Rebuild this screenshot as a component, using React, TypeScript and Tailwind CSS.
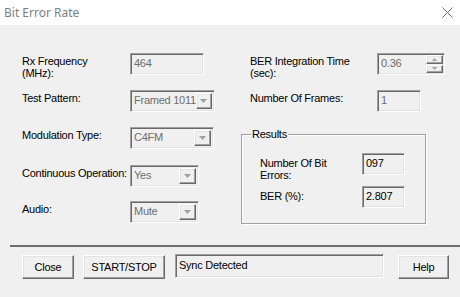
import React from "react";

const sunken =
  "border border-t-[#a0a0a0] border-l-[#a0a0a0] border-r-white border-b-white shadow-[inset_1px_1px_0_#696969,inset_-1px_-1px_0_#e3e3e3]";
const raised =
  "border border-t-white border-l-white border-r-[#696969] border-b-[#696969] shadow-[inset_-1px_-1px_0_#a0a0a0,inset_1px_1px_0_#e3e3e3]";

function Arrow() {
  return (
    <svg width="7" height="4" viewBox="0 0 7 4">
      <polygon points="0,0 7,0 3.5,4" fill="#a0a0a0" />
    </svg>
  );
}

function Edit({ value, w, dark = false }: { value: string; w: string; dark?: boolean }) {
  return (
    <div
      className={`${sunken} ${w} h-[22px] bg-[#f0f0f0] pl-[3px] pt-[3px] whitespace-nowrap ${
        dark ? "text-black" : "text-[#6d6d6d]"
      }`}
    >
      {value}
    </div>
  );
}

function Combo({ value, w }: { value: string; w: string }) {
  return (
    <div className={`${sunken} ${w} h-[22px] flex items-end pb-[2px] pr-[2px]`}>
      <div className="flex-1 self-start pl-[3px] pt-[3px] text-[#6d6d6d] whitespace-nowrap">{value}</div>
      <div className={`${raised} w-[17px] h-[16px] bg-[#f0f0f0] flex items-center justify-center`}>
        <Arrow />
      </div>
    </div>
  );
}

function Label({ children, w }: { children: React.ReactNode; w: string }) {
  return <div className={`${w} pt-[2px] whitespace-nowrap`}>{children}</div>;
}

function Button({ children, w }: { children: React.ReactNode; w: string }) {
  return (
    <div className={`${raised} ${w} h-[24px] bg-[#f0f0f0] flex items-center justify-center whitespace-nowrap`}>
      {children}
    </div>
  );
}

export default function App() {
  return (
    <div
      className="w-[460px] h-[297px] bg-[#f0f0f0] flex flex-col overflow-hidden text-black text-[11px] leading-[12px] tracking-[-0.25px]"
      style={{ fontFamily: "'Liberation Sans', Arial, sans-serif" }}
    >
      <div className="h-[25px] bg-white flex items-center justify-between pl-[4px] pr-[7px] shrink-0 tracking-normal">
        <span className="text-[12px] text-[#808080]" style={{ fontFamily: "'Noto Sans', sans-serif" }}>
          Bit Error Rate
        </span>
        <svg width="11" height="11" viewBox="0 0 11 11">
          <path d="M0.5 0.5 L10.5 10.5 M10.5 0.5 L0.5 10.5" stroke="#707070" strokeWidth="1" />
        </svg>
      </div>

      <div className="flex pl-[22px] pt-[28px]">
        <div className="w-[228px] flex flex-col">
          <div className="flex h-[22px]">
            <Label w="w-[108px]">
              Rx Frequency
              <br />
              (MHz):
            </Label>
            <Edit value="464" w="w-[74px]" />
          </div>
          <div className="flex h-[22px] mt-[15px]">
            <Label w="w-[108px]">Test Pattern:</Label>
            <Combo value="Framed 1011" w="w-[85px]" />
          </div>
          <div className="flex h-[22px] mt-[15px]">
            <Label w="w-[108px]">Modulation Type:</Label>
            <Combo value="C4FM" w="w-[84px]" />
          </div>
          <div className="flex h-[22px] mt-[16px]">
            <Label w="w-[108px]">Continuous Operation:</Label>
            <Combo value="Yes" w="w-[69px]" />
          </div>
          <div className="flex h-[22px] mt-[14px]">
            <Label w="w-[108px]">Audio:</Label>
            <Combo value="Mute" w="w-[69px]" />
          </div>
        </div>

        <div className="flex flex-col">
          <div className="flex h-[22px]">
            <Label w="w-[127px]">
              BER Integration Time
              <br />
              (sec):
            </Label>
            <div className={`${sunken} w-[68px] h-[22px] flex pr-[1px] pt-[1px] pb-[1px]`}>
              <div className="flex-1 pl-[3px] pt-[2px] text-[#6d6d6d]">0.36</div>
              <div className="flex flex-col w-[17px] h-full">
                <div className={`${raised} h-[9px] bg-[#f0f0f0] flex items-center justify-center`}>
                  <svg width="5" height="3" viewBox="0 0 5 3">
                    <polygon points="2.5,0 5,3 0,3" fill="#a0a0a0" />
                  </svg>
                </div>
                <div className={`${raised} h-[9px] mt-[1px] bg-[#f0f0f0] flex items-center justify-center`}>
                  <svg width="5" height="3" viewBox="0 0 5 3">
                    <polygon points="0,0 5,0 2.5,3" fill="#a0a0a0" />
                  </svg>
                </div>
              </div>
            </div>
          </div>
          <div className="flex h-[22px] mt-[15px]">
            <Label w="w-[127px]">Number Of Frames:</Label>
            <Edit value="1" w="w-[44px]" />
          </div>

          <div className="relative mt-[22px] ml-[-9px] w-[185px] h-[90px] border border-[#a0a0a0] shadow-[inset_1px_1px_0_white,1px_1px_0_white] pl-[18px] pt-[18px]">
            <span className="absolute left-[9px] top-[-7px] bg-[#f0f0f0] px-[1px]">Results</span>
            <div className="flex h-[22px]">
              <div className="w-[102px] pt-[4px] whitespace-nowrap">
                Number Of Bit
                <br />
                Errors:
              </div>
              <Edit value="097" w="w-[43px]" dark />
            </div>
            <div className="flex h-[22px] mt-[11px]">
              <div className="w-[102px] pt-[4px]">BER (%):</div>
              <Edit value="2.807" w="w-[43px]" dark />
            </div>
          </div>
        </div>
      </div>

      <div className="ml-[10px] mt-[21px] h-[2px] bg-[#6d6d6d] shrink-0" />

      <div className="flex items-start pl-[22px] mt-[8px]">
        <Button w="w-[52px]">Close</Button>
        <div className="ml-[9px]">
          <Button w="w-[82px]">START/STOP</Button>
        </div>
        <div className={`${sunken} ml-[10px] mt-[-1px] w-[209px] h-[24px] pl-[3px] pt-[4px]`}>Sync Detected</div>
        <div className="ml-[14px]">
          <Button w="w-[51px]">Help</Button>
        </div>
      </div>
    </div>
  );
}
